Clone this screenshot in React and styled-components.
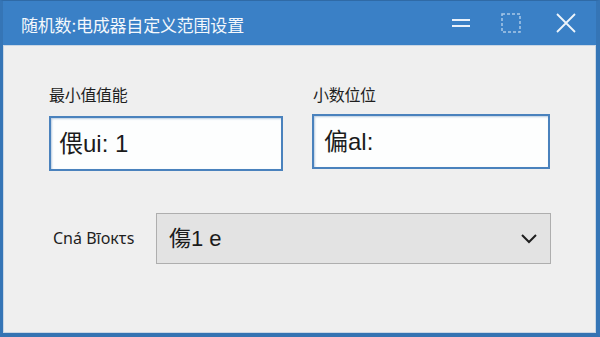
import React from "react";
import styled, { createGlobalStyle } from "styled-components";

const Global = createGlobalStyle`
  html, body { margin: 0; padding: 0; background: #efefef; }
  body { font-family: "Noto Sans", "Noto Sans CJK SC", sans-serif; }
  * { box-sizing: border-box; }
`;

const Window = styled.div`
  width: 600px;
  height: 337px;
  display: flex;
  flex-direction: column;
  background: #3a80c6;
  border-top: 1px solid #2f6aa6;
  border-left: 3px solid #3575b6;
  border-right: 4px solid #3575b6;
  border-bottom: 4px solid #3573b2;
`;

const TitleBar = styled.div`
  height: 44px;
  flex: none;
  display: flex;
  align-items: center;
  padding-left: 18px;
  color: #f4f8fc;
`;

const Title = styled.div`
  flex: 1;
  font-size: 17px;
  line-height: 20px;
  font-family: "Noto Sans CJK SC", sans-serif;
  letter-spacing: -0.2px;
  margin-top: 4px;
`;

const Controls = styled.div`
  display: flex;
  align-items: center;
`;

const CtrlButton = styled.div`
  width: ${(p) => p.w}px;
  height: 44px;
  display: flex;
  align-items: center;
  justify-content: center;
`;

const Body = styled.div`
  flex: 1;
  background: #efefef;
  border: 1px solid #c9d6e4;
  display: flex;
  flex-direction: column;
  padding: 38px 0 0 45px;
`;

const TopRow = styled.div`
  display: flex;
  gap: 29px;
`;

const Field = styled.div`
  display: flex;
  flex-direction: column;
  width: ${(p) => p.w}px;
`;

const Label = styled.div`
  font-family: "Noto Sans CJK SC", sans-serif;
  font-size: 16px;
  line-height: 20px;
  color: #1e1e1e;
  padding-left: ${(p) => p.pl || 0}px;
  margin-bottom: ${(p) => p.mb}px;
  letter-spacing: -0.3px;
`;

const Input = styled.div`
  height: 55px;
  background: #fdfefe;
  border: 2px solid #4a82bd;
  box-shadow: inset 1px 1px 2px rgba(60, 110, 170, 0.35);
  display: flex;
  align-items: center;
  padding-left: ${(p) => p.pl}px;
  font-size: 24px;
  color: #1b1b1b;
  font-family: "Liberation Sans", "Noto Sans CJK SC", sans-serif;
  line-height: 28px;
`;

const BottomRow = styled.div`
  display: flex;
  align-items: center;
  margin-top: 42px;
`;

const RowLabel = styled.div`
  width: 107px;
  padding-left: 4px;
  font-family: "Noto Sans", sans-serif;
  font-size: 16px;
  line-height: 20px;
  color: #1e1e1e;
  margin-top: -1px;
`;

const Select = styled.div`
  width: 395px;
  height: 51px;
  background: #e3e3e3;
  border: 1px solid #aeaeae;
  display: flex;
  align-items: center;
  justify-content: space-between;
  padding: 0 12px 0 12px;
  font-size: 22px;
  color: #1b1b1b;
  font-family: "Liberation Sans", "Noto Sans CJK SC", sans-serif;
  line-height: 28px;
`;

export default function App() {
  return (
    <>
      <Global />
      <Window>
        <TitleBar>
          <Title>随机数:电成器自定义范围设置</Title>
          <Controls>
            <CtrlButton w={50}>
              <svg width="20" height="14" viewBox="0 0 20 14">
                <line x1="1" y1="4" x2="19" y2="4" stroke="#e9f1fa" strokeWidth="2" />
                <line x1="1" y1="10" x2="19" y2="10" stroke="#e9f1fa" strokeWidth="2" />
              </svg>
            </CtrlButton>
            <CtrlButton w={50}>
              <svg width="20" height="20" viewBox="0 0 20 20">
                <rect x="1" y="1" width="18" height="18" fill="none" stroke="#a9c8e8" strokeWidth="1.5" strokeDasharray="3 2" />
              </svg>
            </CtrlButton>
            <CtrlButton w={60}>
              <svg width="20" height="20" viewBox="0 0 20 20">
                <path d="M1 1 L19 19 M19 1 L1 19" stroke="#eef4fb" strokeWidth="1.8" fill="none" />
              </svg>
            </CtrlButton>
          </Controls>
        </TitleBar>
        <Body>
          <TopRow>
            <Field w={234}>
              <Label mb={12}>最小值值能</Label>
              <Input pl={8}>偎ui: 1</Input>
            </Field>
            <Field w={238}>
              <Label pl={1} mb={10}>小数位位</Label>
              <Input pl={10}>偏al:</Input>
            </Field>
          </TopRow>
          <BottomRow>
            <RowLabel>Cná Bīoкτs</RowLabel>
            <Select>
              <span>傷1 e</span>
              <svg width="18" height="12" viewBox="0 0 18 12">
                <path d="M2 2 L9 9 L16 2" stroke="#1f1f1f" strokeWidth="2" fill="none" />
              </svg>
            </Select>
          </BottomRow>
        </Body>
      </Window>
    </>
  );
}
